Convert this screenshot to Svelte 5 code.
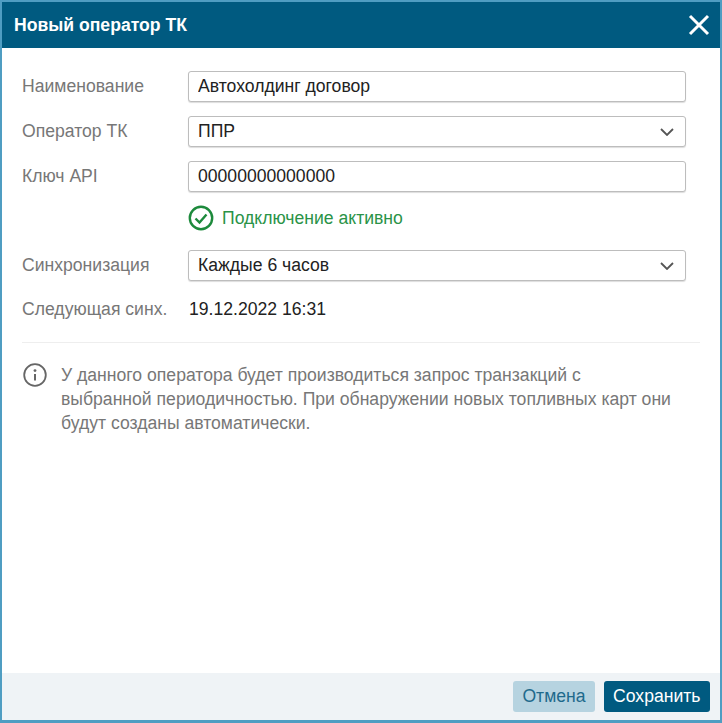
<script>
  let name = "Автохолдинг договор";
  let apiKey = "00000000000000";
</script>

<div class="dialog">
  <header class="head">
    <h1>Новый оператор ТК</h1>
    <button class="close" aria-label="Закрыть">
      <svg width="22" height="22" viewBox="0 0 22 22"><path d="M2 2 L20 20 M20 2 L2 20" stroke="#fff" stroke-width="3" fill="none" /></svg>
    </button>
  </header>

  <main class="body">
    <div class="form">
      <div class="row">
        <span class="label">Наименование</span>
        <input class="field" type="text" value={name} />
      </div>
      <div class="row">
        <span class="label">Оператор ТК</span>
        <div class="field select">
          ППР
          <svg width="14" height="8" viewBox="0 0 14 8"><path d="M1 1 L7 7 L13 1" stroke="#555" stroke-width="1.8" fill="none" /></svg>
        </div>
      </div>
      <div class="row">
        <span class="label">Ключ API</span>
        <input class="field" type="text" value={apiKey} />
      </div>
      <div class="status">
        <svg width="26" height="26" viewBox="0 0 26 26">
          <circle cx="13" cy="13" r="11.2" stroke="#1d8a3c" stroke-width="2.4" fill="none" />
          <path d="M7.5 13.5 L11.5 17.5 L18.5 9.5" stroke="#1d8a3c" stroke-width="2.4" fill="none" />
        </svg>
        <span>Подключение активно</span>
      </div>
      <div class="row">
        <span class="label">Синхронизация</span>
        <div class="field select">
          Каждые 6 часов
          <svg width="14" height="8" viewBox="0 0 14 8"><path d="M1 1 L7 7 L13 1" stroke="#555" stroke-width="1.8" fill="none" /></svg>
        </div>
      </div>
      <div class="row next">
        <span class="label">Следующая синх.</span>
        <span class="value">19.12.2022 16:31</span>
      </div>
    </div>

    <hr />

    <div class="info">
      <svg width="26" height="26" viewBox="0 0 26 26">
        <circle cx="13" cy="13" r="10.8" stroke="#666" stroke-width="1.8" fill="none" />
        <circle cx="13" cy="8.6" r="1.4" fill="#666" />
        <path d="M13 12 V18.5" stroke="#666" stroke-width="2" />
      </svg>
      <p>У данного оператора будет производиться запрос транзакций с выбранной периодичностью. При обнаружении новых топливных карт они будут созданы автоматически.</p>
    </div>
  </main>

  <footer class="foot">
    <button class="btn cancel">Отмена</button>
    <button class="btn save">Сохранить</button>
  </footer>
</div>

<style>
  :global(body) {
    margin: 0;
    background: #fff;
  }
  .dialog {
    box-sizing: border-box;
    width: 722px;
    height: 723px;
    display: flex;
    flex-direction: column;
    border: 2px solid #4f9dc2;
    border-bottom-width: 3px;
    font-family: "Liberation Sans", Arial, sans-serif;
    font-size: 17.6px;
    color: #222;
    background: #fff;
  }
  .head {
    height: 46px;
    flex: none;
    display: flex;
    align-items: center;
    justify-content: space-between;
    padding: 0 10px 0 12px;
    background: #005a80;
  }
  h1 {
    margin: 0;
    font-size: 17.6px;
    font-weight: bold;
    color: #fff;
  }
  .close {
    display: flex;
    padding: 0;
    border: none;
    background: none;
  }
  .body {
    flex: 1;
    padding: 23px 20px 0;
  }
  .form {
    display: flex;
    flex-direction: column;
    padding-right: 14px;
  }
  .row {
    display: grid;
    grid-template-columns: 166px 1fr;
    align-items: center;
    margin-bottom: 14px;
  }
  .label {
    color: #777;
  }
  .field {
    box-sizing: border-box;
    width: 100%;
    height: 31px;
    padding: 0 9px;
    border: 1px solid #bdbdbd;
    border-radius: 3px;
    background: #fff;
    font: inherit;
    color: #222;
    box-shadow: 0 1px 1px #ddd;
  }
  .select {
    display: flex;
    align-items: center;
    justify-content: space-between;
    padding-right: 11px;
  }
  .status {
    display: flex;
    align-items: center;
    gap: 8px;
    height: 26px;
    margin: -1px 0 19px 166px;
    color: #2a9347;
  }
  .next {
    margin: 0;
    height: 28px;
  }
  .value {
    color: #222;
    padding-left: 1px;
  }
  hr {
    margin: 19px 0 0;
    border: none;
    border-top: 1px solid #eee;
  }
  .info {
    display: flex;
    gap: 13px;
    margin-top: 17px;
    color: #777;
  }
  .info svg {
    flex: none;
    margin-top: 2px;
  }
  .info p {
    margin: 3px 0 0;
    width: 612px;
    line-height: 24px;
  }
  .foot {
    height: 47px;
    flex: none;
    display: flex;
    align-items: center;
    justify-content: flex-end;
    gap: 9px;
    padding: 0 10px;
    background: #eff3f6;
  }
  .btn {
    height: 31px;
    padding: 0 9px;
    border: none;
    border-radius: 3px;
    font: inherit;
  }
  .cancel {
    background: #b6d3e0;
    color: #1f6a8c;
  }
  .save {
    padding: 0 9.5px;
    background: #005a80;
    color: #fff;
  }
</style>
